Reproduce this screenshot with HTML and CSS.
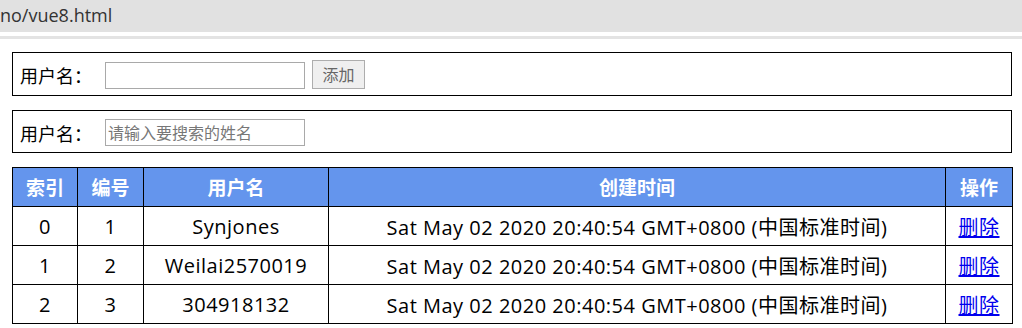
FILE: index.html
```html
<!DOCTYPE html>
<html lang="zh-CN">
<head>
<meta charset="utf-8">
<title>vue8</title>
<link rel="stylesheet" href="styles.css">
</head>
<body>
<div class="addr">no/vue8.html</div>
<div class="sep"></div>
<main class="page">
  <div class="panel">
    <label class="lbl">用户名：</label>
    <input class="txt" type="text">
    <button class="btn" type="button">添加</button>
  </div>
  <div class="panel">
    <label class="lbl">用户名：</label>
    <input class="txt" type="text" placeholder="请输入要搜索的姓名">
  </div>
  <table class="grid">
    <colgroup>
      <col class="c1"><col class="c2"><col class="c3"><col class="c4"><col class="c5">
    </colgroup>
    <thead>
      <tr><th>索引</th><th>编号</th><th>用户名</th><th>创建时间</th><th>操作</th></tr>
    </thead>
    <tbody>
      <tr><td>0</td><td>1</td><td>Synjones</td><td>Sat May 02 2020 20:40:54 GMT+0800 (中国标准时间)</td><td><a href="#">删除</a></td></tr>
      <tr><td>1</td><td>2</td><td>Weilai2570019</td><td>Sat May 02 2020 20:40:54 GMT+0800 (中国标准时间)</td><td><a href="#">删除</a></td></tr>
      <tr><td>2</td><td>3</td><td>304918132</td><td>Sat May 02 2020 20:40:54 GMT+0800 (中国标准时间)</td><td><a href="#">删除</a></td></tr>
    </tbody>
  </table>
</main>
</body>
</html>
```
FILE: styles.css
```css
html, body {
  margin: 0;
  padding: 0;
  background: #fff;
}
body {
  font-family: "Open Sans", "Noto Sans CJK SC", sans-serif;
  color: #000;
}
.addr {
  height: 32px;
  background: #e1e1e1;
  color: #333;
  font-size: 18px;
  line-height: 30px;
  padding-left: 0;
  white-space: nowrap;
}
.sep {
  margin-top: 4px;
  height: 3px;
  background: #e3e3e3;
}
.page {
  padding: 13px 10px 0 12px;
  width: 1000px;
}
.panel {
  box-sizing: border-box;
  width: 1000px;
  height: 44px;
  border: 1px solid #000;
  display: flex;
  align-items: center;
  padding: 2px 0 0 7px;
  margin-bottom: 14px;
}
.panel + .panel {
  height: 43px;
}
.lbl {
  font-family: "Open Sans", "Noto Sans CJK TC", sans-serif;
  font-size: 18px;
  width: 85px;
}
.txt {
  box-sizing: border-box;
  width: 200px;
  height: 27px;
  border: 1px solid #a9a9a9;
  padding: 0 2px;
  font-family: "Open Sans", "Noto Sans CJK SC", sans-serif;
  font-size: 16px;
  margin: 0;
}
.txt::placeholder {
  color: #777;
}
.btn {
  box-sizing: border-box;
  margin-left: 7px;
  height: 29px;
  width: 53px;
  border: 1px solid #adadad;
  background: #efefef;
  color: #666;
  font-family: "Open Sans", "Noto Sans CJK SC", sans-serif;
  font-size: 16px;
  padding: 0;
  margin-top: -2px;
}
.grid {
  border-collapse: collapse;
  width: 1000px;
  table-layout: fixed;
  font-size: 20px;
  letter-spacing: 0.5px;
}
.c1 { width: 65px; }
.c2 { width: 66px; }
.c3 { width: 185px; }
.c4 { width: 617px; }
.c5 { width: 67px; }
.grid th, .grid td {
  border: 1px solid #000;
  text-align: center;
  height: 38px;
  padding: 0;
  white-space: nowrap;
}
.grid th {
  background: #6495ed;
  color: #fff;
  font-weight: bold;
  font-size: 19px;
  letter-spacing: 0;
}
.grid a {
  color: #0000ee;
}
```
